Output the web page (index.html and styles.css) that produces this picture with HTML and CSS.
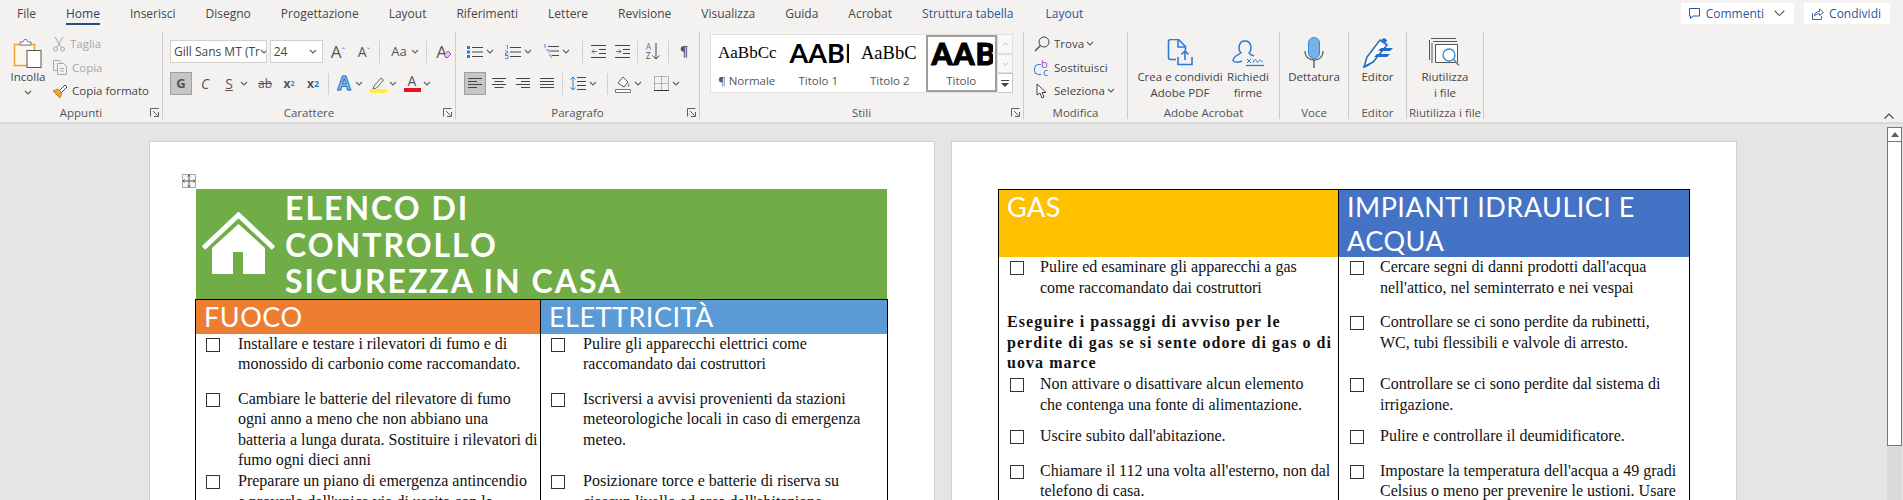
FILE: index.html
```html
<!DOCTYPE html>
<html lang="it">
<head>
    <meta charset="UTF-8">
    <meta name="viewport" content="width=device-width, initial-scale=1.0">
    <title>Elenco di controllo sicurezza in casa</title>
    <link rel="stylesheet" href="styles.css">
</head>
<body>
    <svg class="defs" width="0" height="0">
        <symbol id="chev" viewBox="0 0 8 5"><path d="M1 1l3 3 3-3" fill="none" stroke="#605e5c" stroke-width="1.1"/></symbol>
        <symbol id="launch" viewBox="0 0 9 9"><path d="M.5 8.500v-8h8M3 3l4.500 4.500M4 8.500h4.500V4" fill="none" stroke="#605e5c"/></symbol>
        <symbol id="left" viewBox="0 0 16 14"><path d="M1 1.500h14M1 4.500h9M1 7.500h14M1 10.500h9" fill="none" stroke="#444"/></symbol>
        <symbol id="center" viewBox="0 0 16 14"><path d="M1 1.500h14M3.500 4.500h9M1 7.500h14M3.500 10.500h9" fill="none" stroke="#444"/></symbol>
        <symbol id="right" viewBox="0 0 16 14"><path d="M1 1.500h14M6 4.500h9M1 7.500h14M6 10.500h9" fill="none" stroke="#444"/></symbol>
        <symbol id="justify" viewBox="0 0 16 14"><path d="M1 1.500h14M1 4.500h14M1 7.500h14M1 10.500h14" fill="none" stroke="#444"/></symbol>
    </svg>

    <!-- schede -->
    <div class="tabs">
        <span class="tab first">File</span>
        <span class="tab active">Home</span>
        <span class="tab">Inserisci</span>
        <span class="tab">Disegno</span>
        <span class="tab">Progettazione</span>
        <span class="tab">Layout</span>
        <span class="tab">Riferimenti</span>
        <span class="tab">Lettere</span>
        <span class="tab">Revisione</span>
        <span class="tab">Visualizza</span>
        <span class="tab">Guida</span>
        <span class="tab">Acrobat</span>
        <span class="tab context">Struttura tabella</span>
        <span class="tab context context-last">Layout</span>
        <div class="tab-actions">
            <div class="action comments">
                <svg width="13" height="13" viewBox="0 0 13 13"><path d="M1.500 1.500h10v7.500H5L2.500 11.500V9h-1z" fill="none" stroke="#2b579a"/></svg>
                <span>Commenti</span>
                <svg class="action-chev" width="11" height="7" viewBox="0 0 8 5"><path d="M.5.500L4 4 7.500.500" fill="none" stroke="#605e5c" stroke-width=".8"/></svg>
            </div>
            <div class="action">
                <svg width="13" height="13" viewBox="0 0 13 13"><path d="M1.500 6v6.500h9V9M3.500 9c0-3 2-4.500 5-4.500V2l4 3.500-4 3V6.500c-2 0-3.500 1-5 2.500z" fill="none" stroke="#2b579a" stroke-width=".9"/></svg>
                <span>Condividi</span>
            </div>
        </div>
    </div>

    <!-- barra multifunzione -->
    <div class="ribbon">
        <section class="group g-appunti">
            <div class="group-body row-top">
                <div class="big incolla">
                    <div class="big-icon">
                        <svg width="30" height="30" viewBox="0 0 30 30">
                            <rect x="1.500" y="6.500" width="20" height="21" fill="#fdf6ea" stroke="#e9a23b" stroke-width="1.500"/>
                            <path d="M7 7V4h3l1.500-2.500 2 0L15 4h3v3z" fill="#fff" stroke="#777"/>
                            <rect x="14" y="12.500" width="14" height="17" fill="#fff" stroke="#555"/>
                        </svg>
                    </div>
                    <span>Incolla</span>
                    <svg class="cv-big" width="8" height="5"><use href="#chev"/></svg>
                </div>
                <div class="small-list">
                    <div class="small disabled">
                        <svg width="14" height="16" viewBox="0 0 14 16"><path d="M3 1l6 10M11 1L5 11" stroke="#a6a6a6" fill="none"/><circle cx="3.500" cy="13" r="2" fill="none" stroke="#a6a6a6"/><circle cx="10.500" cy="13" r="2" fill="none" stroke="#a6a6a6"/></svg>
                        <span>Taglia</span>
                    </div>
                    <div class="small disabled">
                        <svg width="16" height="16" viewBox="0 0 16 16"><path d="M5 11.500H1.500v-10h6l2 2" fill="none" stroke="#a6a6a6"/><path d="M5.500 4.500h6l3 3v8h-9z" fill="none" stroke="#a6a6a6"/><path d="M8 9.500h4M8 12h4" stroke="#a6a6a6"/></svg>
                        <span>Copia</span>
                    </div>
                    <div class="small">
                        <svg width="16" height="16" viewBox="0 0 16 16"><path d="M1 8l5-2 4 4-2 5z" fill="#f0a33c" stroke="#c77e1c"/><path d="M8 7l5-5 2 2-5 5" fill="#fff" stroke="#444"/></svg>
                        <span>Copia formato</span>
                    </div>
                </div>
            </div>
            <div class="group-label">Appunti<svg class="launch" width="9" height="9"><use href="#launch"/></svg></div>
        </section>

        <section class="group g-carattere">
            <div class="group-body">
                <div class="tool-row">
                    <div class="combo font-combo"><span>Gill Sans MT (Tr</span><svg width="8" height="5"><use href="#chev"/></svg></div>
                    <div class="combo size-combo"><span>24</span><svg width="8" height="5"><use href="#chev"/></svg></div>
                    <span class="tb grow-a">A<sup>ˆ</sup></span>
                    <span class="tb shrink-a">A<sup>ˇ</sup></span>
                    <i class="sep"></i>
                    <span class="tb case-a">Aa</span><svg class="cv" width="8" height="5"><use href="#chev"/></svg>
                    <i class="sep sep-case"></i>
                    <span class="tb clear-a">A<svg width="9" height="9" viewBox="0 0 9 9"><path d="M1 5l4-4 3 3-4 4z" fill="#e8c5ef" stroke="#a64dbb"/></svg></span>
                </div>
                <div class="tool-row">
                    <span class="tb on bold">G</span>
                    <span class="tb italic">C</span>
                    <span class="tb under">S</span><svg class="cv" width="8" height="5"><use href="#chev"/></svg>
                    <span class="tb strike">ab</span>
                    <span class="tb script">x<sub>2</sub></span>
                    <span class="tb script">x<sup>2</sup></span>
                    <i class="sep"></i>
                    <span class="tb effect">A</span><svg class="cv" width="8" height="5"><use href="#chev"/></svg>
                    <span class="tb">
                        <svg width="17" height="18" viewBox="0 0 17 18"><path d="M4 11l7-8 2.500 2-7 8-3.500 1z" fill="none" stroke="#666"/><rect y="14" width="17" height="4" fill="#ffef3c"/></svg>
                    </span><svg class="cv" width="8" height="5"><use href="#chev"/></svg>
                    <span class="tb font-color">A</span><svg class="cv" width="8" height="5"><use href="#chev"/></svg>
                </div>
            </div>
            <div class="group-label">Carattere<svg class="launch" width="9" height="9"><use href="#launch"/></svg></div>
        </section>

        <section class="group g-paragrafo">
            <div class="group-body">
                <div class="tool-row">
                    <span class="tb">
                        <svg width="16" height="14" viewBox="0 0 16 14"><path d="M5 2.500h11M5 7h11M5 11.500h11" stroke="#444"/><path d="M0 1h3v3H0zM0 5.500h3v3H0zM0 10h3v3H0z" fill="#2b7cd3"/></svg>
                    </span><svg class="cv" width="8" height="5"><use href="#chev"/></svg>
                    <span class="tb">
                        <svg width="16" height="14" viewBox="0 0 16 14"><path d="M5 2.500h11M5 7h11M5 11.500h11" stroke="#444"/><path d="M1 0h1.500v4M0 6h2.500v2H.5v2H3M0 10.500h3v3H0" fill="none" stroke="#2b7cd3" stroke-width=".8"/></svg>
                    </span><svg class="cv" width="8" height="5"><use href="#chev"/></svg>
                    <span class="tb">
                        <svg width="16" height="15" viewBox="0 0 16 15"><path d="M5 2.500h11M7 7h9M9 11.500h7" stroke="#444"/><path d="M1 0h1v4M3 6h3v3M6 11h2v3" fill="none" stroke="#2b7cd3" stroke-width=".8"/></svg>
                    </span><svg class="cv" width="8" height="5"><use href="#chev"/></svg>
                    <i class="sep sep-push"></i>
                    <span class="tb">
                        <svg width="15" height="13" viewBox="0 0 15 13"><path d="M0 .500h15M8 4.500h7M8 8.500h7M0 12.500h15" stroke="#444"/><path d="M6 6.500H1M3 4.500l-2 2 2 2" fill="none" stroke="#2b7cd3"/></svg>
                    </span>
                    <span class="tb">
                        <svg width="15" height="13" viewBox="0 0 15 13"><path d="M0 .500h15M8 4.500h7M8 8.500h7M0 12.500h15" stroke="#444"/><path d="M1 6.500h5M4 4.500l2 2-2 2" fill="none" stroke="#2b7cd3"/></svg>
                    </span>
                    <i class="sep"></i>
                    <span class="tb sort"><span class="sort-text"><b>A</b><b>Z</b></span><svg width="8" height="17" viewBox="0 0 8 17"><path d="M4 0v16M.5 12.500L4 16l3.500-3.500" fill="none" stroke="#444"/></svg></span>
                    <i class="sep"></i>
                    <span class="tb pilcrow">¶</span>
                </div>
                <div class="tool-row">
                    <span class="tb on"><svg width="16" height="14"><use href="#left"/></svg></span>
                    <span class="tb"><svg width="16" height="14"><use href="#center"/></svg></span>
                    <span class="tb"><svg width="16" height="14"><use href="#right"/></svg></span>
                    <span class="tb"><svg width="16" height="14"><use href="#justify"/></svg></span>
                    <i class="sep"></i>
                    <span class="tb">
                        <svg width="16" height="15" viewBox="0 0 16 15"><path d="M7 1.500h9M7 5.500h9M7 9.500h9M7 13.500h9" stroke="#444"/><path d="M3 1v13M.5 3.500L3 1l2.500 2.500M.5 11.500L3 14l2.500-2.500" fill="none" stroke="#2b7cd3"/></svg>
                    </span><svg class="cv" width="8" height="5"><use href="#chev"/></svg>
                    <i class="sep"></i>
                    <span class="tb">
                        <svg width="16" height="18" viewBox="0 0 16 18"><path d="M3 8l5-6 5 5-4 5z" fill="#fff" stroke="#555"/><path d="M13 8l1.500 3-1.500 1z" fill="#2b7cd3"/><path d="M.5 14.500h15v3H.5z" fill="#fff" stroke="#777"/></svg>
                    </span><svg class="cv" width="8" height="5"><use href="#chev"/></svg>
                    <span class="tb">
                        <svg width="15" height="15" viewBox="0 0 15 15"><path d="M.5.500h14v14H.5zM.5 7.500h14M7.500.500v14" fill="none" stroke="#777" stroke-dasharray="1 1"/><path d="M0 14.500h15" stroke="#333"/></svg>
                    </span><svg class="cv" width="8" height="5"><use href="#chev"/></svg>
                </div>
            </div>
            <div class="group-label">Paragrafo<svg class="launch" width="9" height="9"><use href="#launch"/></svg></div>
        </section>

        <section class="group g-stili">
            <div class="group-body gallery-wrap">
                <div class="gallery">
                    <div class="style-card"><div class="sample s-normal">AaBbCcDd</div><div class="style-name">¶ Normale</div></div>
                    <div class="style-card"><div class="sample s-h1">AABB</div><div class="style-name">Titolo 1</div></div>
                    <div class="style-card"><div class="sample s-h2">AaBbC</div><div class="style-name">Titolo 2</div></div>
                    <div class="style-card selected"><div class="sample s-title">AABB</div><div class="style-name">Titolo</div></div>
                </div>
                <div class="gallery-scroll">
                    <span><svg width="7" height="4" viewBox="0 0 8 5"><path d="M1 4l3-3 3 3" fill="none" stroke="#b5b3b1"/></svg></span>
                    <span><svg width="7" height="4" viewBox="0 0 8 5"><path d="M1 1l3 3 3-3" fill="none" stroke="#b5b3b1"/></svg></span>
                    <span><svg width="8" height="8" viewBox="0 0 8 8"><path d="M0 1.500h8" stroke="#444"/><path d="M0 4h8L4 8z" fill="#444"/></svg></span>
                </div>
            </div>
            <div class="group-label">Stili<svg class="launch" width="9" height="9"><use href="#launch"/></svg></div>
        </section>

        <section class="group g-modifica">
            <div class="group-body row-top">
                <div class="small-list">
                    <div class="small">
                        <svg width="16" height="16" viewBox="0 0 16 16"><circle cx="10" cy="6" r="5" fill="none" stroke="#444"/><path d="M6.500 9.500L1 15" stroke="#444" stroke-width="1.300"/></svg>
                        <span>Trova</span><svg class="cv trova-cv" width="8" height="5"><use href="#chev"/></svg>
                    </div>
                    <div class="small">
                        <span class="replace"><b>b</b><i>c</i></span>
                        <span>Sostituisci</span>
                    </div>
                    <div class="small">
                        <svg width="16" height="16" viewBox="0 0 16 16"><path d="M3 1v11l3-2 2 5 2-1-2-4.500h4z" fill="#fff" stroke="#444"/></svg>
                        <span>Seleziona</span><svg class="cv" width="8" height="5"><use href="#chev"/></svg>
                    </div>
                </div>
            </div>
            <div class="group-label">Modifica</div>
        </section>

        <section class="group g-acrobat">
            <div class="group-body row-top">
                <div class="big crea">
                    <div class="big-icon">
                        <svg width="26" height="28" viewBox="0 0 26 28"><path d="M9 20.500H3.500a2 2 0 0 1-2-2V2.500a2 2 0 0 1 2-2h8l7 7v4" fill="none" stroke="#2b7cd3" stroke-width="1.600"/><path d="M11 1v7h7" fill="none" stroke="#2b7cd3" stroke-width="1.600"/><path d="M11 18v7.500h14V18M18 21v-9M14.500 15.500L18 12l3.500 3.500" fill="none" stroke="#2b7cd3" stroke-width="1.600"/></svg>
                    </div>
                    <span>Crea e condividi<br>Adobe PDF</span>
                </div>
                <div class="big firme">
                    <div class="big-icon">
                        <svg width="32" height="28" viewBox="0 0 32 28"><path d="M1 22c0-5 5-6 8-8-3-3-3-12 4-12s7 9 4 12c1 2 3 2 5 3M1 22c3 2 7 1 9 0" fill="none" stroke="#2b7cd3" stroke-width="1.500"/><path d="M15 20l4 4M19 20l-4 4M21 24c2-6 3-3 4-1s2-3 3-2 2 2 3 1" fill="none" stroke="#2b7cd3"/><path d="M14 26.500h18" stroke="#2b7cd3" stroke-width="1.300"/></svg>
                    </div>
                    <span>Richiedi<br>firme</span>
                </div>
            </div>
            <div class="group-label">Adobe Acrobat</div>
        </section>

        <section class="group g-voce">
            <div class="group-body row-top">
                <div class="big wide">
                    <div class="big-icon">
                        <svg width="20" height="31" viewBox="0 0 20 31"><rect x="4.500" y=".5" width="11" height="21" rx="5.500" fill="#77b1ea" stroke="#3e86d0"/><path d="M1 14c0 6 4 9 9 9s9-3 9-9" fill="none" stroke="#666" stroke-width="1.300"/><path d="M10 23v8" stroke="#666" stroke-width="1.500"/></svg>
                    </div>
                    <span>Dettatura</span>
                </div>
            </div>
            <div class="group-label">Voce</div>
        </section>

        <section class="group g-editor">
            <div class="group-body row-top">
                <div class="big wide">
                    <div class="big-icon">
                        <svg width="32" height="31" viewBox="0 0 32 31"><path d="M2 30l3-10L18 3l7 5-14 17z" fill="#fff" stroke="#1f6fc4" stroke-width="1.600"/><path d="M2 30l6-3" stroke="#1f6fc4" stroke-width="1.600"/><path d="M19 3l3-2 3 2-1 3zM19 11h12l-3 3H16zM15 17h13l-3 3H12z" fill="#1f6fc4"/></svg>
                    </div>
                    <span>Editor</span>
                </div>
            </div>
            <div class="group-label">Editor</div>
        </section>

        <section class="group g-riuso">
            <div class="group-body row-top">
                <div class="big wide">
                    <div class="big-icon">
                        <svg width="32" height="29" viewBox="0 0 32 29"><path d="M2 .5h25M.5 2v20M4 3.500h24M3 5v20" fill="none" stroke="#555"/><path d="M6.500 6.500h22v18h-22z" fill="#fff" stroke="#555"/><circle cx="20" cy="17" r="6" fill="#fff" stroke="#3e86d0" stroke-width="1.300"/><path d="M24.500 21.500L30 27.500" stroke="#3e86d0" stroke-width="1.500"/></svg>
                    </div>
                    <span>Riutilizza<br>i file</span>
                </div>
            </div>
            <div class="group-label">Riutilizza i file</div>
        </section>

        <svg class="collapse" width="10" height="6" viewBox="0 0 10 6"><path d="M.5 5.500L5 1l4.500 4.500" fill="none" stroke="#444" stroke-width="1.100"/></svg>
    </div>

    <!-- area documento -->
    <div class="workspace">
        <div class="pages">
            <article class="page page-left">
                <div class="move-handle">
                    <svg width="12" height="12" viewBox="0 0 12 12"><path d="M6 0v12M0 6h12M4.500 1.500L6 0l1.500 1.500M4.500 10.500L6 12l1.500-1.500M1.500 4.500L0 6l1.500 1.500M10.500 4.500L12 6l-1.500 1.500" fill="none" stroke="#555"/></svg>
                </div>
                <header class="banner">
                    <svg class="house" width="74" height="63" viewBox="0 0 74 63"><path d="M1.500 36L36.500 3l35 33" fill="none" stroke="#fff" stroke-width="5"/><path d="M36.500 12L63 36v26H41V40H31v22H10V36z" fill="#fff"/></svg>
                    <h1>ELENCO DI<br>CONTROLLO<br>SICUREZZA IN CASA</h1>
                </header>
                <table class="checklist first-table">
                    <colgroup><col class="col-a"><col></colgroup>
                    <tr>
                        <th class="orange">FUOCO</th>
                        <th class="sky">ELETTRICITÀ</th>
                    </tr>
                    <tr>
                        <td><div class="item"><i class="box"></i><p>Installare e testare i rilevatori di fumo e di<br>monossido di carbonio come raccomandato.</p></div></td>
                        <td><div class="item"><i class="box"></i><p>Pulire gli apparecchi elettrici come<br>raccomandato dai costruttori</p></div></td>
                    </tr>
                    <tr>
                        <td><div class="item flush"><i class="box"></i><p>Cambiare le batterie del rilevatore di fumo<br>ogni anno a meno che non abbiano una<br>batteria a lunga durata. Sostituire i rilevatori di<br>fumo ogni dieci anni</p></div></td>
                        <td><div class="item"><i class="box"></i><p>Iscriversi a avvisi provenienti da stazioni<br>meteorologiche locali in caso di emergenza<br>meteo.</p></div></td>
                    </tr>
                    <tr>
                        <td><div class="item"><i class="box"></i><p>Preparare un piano di emergenza antincendio<br>e provarlo dell'unica via di uscita con la</p></div></td>
                        <td><div class="item"><i class="box"></i><p>Posizionare torce e batterie di riserva su<br>ciascun livello ed area dell'abitazione</p></div></td>
                    </tr>
                </table>
            </article>

            <article class="page page-right">
                <table class="checklist second-table">
                    <colgroup><col class="col-b"><col></colgroup>
                    <tr>
                        <th class="gold">GAS</th>
                        <th class="blue">IMPIANTI IDRAULICI E ACQUA</th>
                    </tr>
                    <tr>
                        <td><div class="item"><i class="box"></i><p>Pulire ed esaminare gli apparecchi a gas<br>come raccomandato dai costruttori</p></div></td>
                        <td><div class="item"><i class="box"></i><p>Cercare segni di danni prodotti dall'acqua<br>nell'attico, nel seminterrato e nei vespai</p></div></td>
                    </tr>
                    <tr>
                        <td><p class="warning">Eseguire i passaggi di avviso per le<br>perdite di gas se si sente odore di gas o di<br>uova marce</p></td>
                        <td><div class="item"><i class="box"></i><p>Controllare se ci sono perdite da rubinetti,<br>WC, tubi flessibili e valvole di arresto.</p></div></td>
                    </tr>
                    <tr>
                        <td><div class="item tight"><i class="box"></i><p>Non attivare o disattivare alcun elemento<br>che contenga una fonte di alimentazione.</p></div></td>
                        <td><div class="item tight"><i class="box"></i><p>Controllare se ci sono perdite dal sistema di<br>irrigazione.</p></div></td>
                    </tr>
                    <tr>
                        <td><div class="item"><i class="box"></i><p>Uscire subito dall'abitazione.</p></div></td>
                        <td><div class="item"><i class="box"></i><p>Pulire e controllare il deumidificatore.</p></div></td>
                    </tr>
                    <tr>
                        <td><div class="item"><i class="box"></i><p>Chiamare il 112 una volta all'esterno, non dal<br>telefono di casa.</p></div></td>
                        <td><div class="item"><i class="box"></i><p>Impostare la temperatura dell'acqua a 49 gradi<br>Celsius o meno per prevenire le ustioni. Usare</p></div></td>
                    </tr>
                </table>
            </article>
        </div>

        <div class="scrollbar">
            <div class="scroll-btn"><svg width="8" height="5" viewBox="0 0 8 5"><path d="M0 5l4-5 4 5z" fill="#605e5c"/></svg></div>
            <div class="scroll-thumb"></div>
            <div class="scroll-track"></div>
        </div>
    </div>
</body>
</html>
```

FILE: styles.css
```css
* {
    box-sizing: border-box;
}

html, body {
    height: 500px;
    overflow: hidden;
}

body {
    margin: 0;
    background: #f3f2f1;
    color: #444;
    font-family: 'Open Sans', 'Noto Sans', sans-serif;
    font-size: 11.5px;
}

.defs {
    position: absolute;
}

svg {
    flex: none;
    display: block;
}

/* schede */
.tabs {
    display: flex;
    height: 32px;
    padding-left: 2px;
    font-size: 12px;
}

.tab {
    position: relative;
    height: 28px;
    padding: 5px 15px 0;
    line-height: 18px;
    white-space: nowrap;
    color: #484644;
}

.tab.active {
    color: #2b3f66;
}

.tab.active::after {
    content: '';
    position: absolute;
    left: 15px;
    right: 15px;
    bottom: 3px;
    height: 2px;
    background: #1e4e8c;
}

.tab.context {
    color: #2b579a;
}

.tab.context-last {
    margin-left: 2px;
}

.tab-actions {
    display: flex;
    gap: 10px;
    margin-left: auto;
    margin-right: 13px;
    padding-top: 3px;
}

.action {
    display: flex;
    align-items: center;
    gap: 5px;
    height: 21px;
    padding: 0 9px 0 7px;
    background: #fff;
    color: #2b579a;
}

.action-chev {
    margin-left: 5px;
}

/* barra multifunzione */
.ribbon {
    position: relative;
    display: flex;
    height: 92px;
    border-bottom: 2px solid #d9d8d8;
}

.group {
    display: flex;
    flex-direction: column;
    height: 87px;
    border-right: 1px solid #cdcbc9;
}

.g-appunti { width: 163px; }
.g-carattere { width: 293px; }
.g-paragrafo { width: 244px; }
.g-stili { width: 324px; }
.g-modifica { width: 104px; }
.g-acrobat { width: 152px; }
.g-voce { width: 69px; }
.g-editor { width: 58px; }
.g-riuso { width: 77px; }

.group-body {
    flex: 1;
    min-height: 0;
    padding: 8px 0 0 7px;
}

.g-paragrafo .group-body {
    padding-left: 8px;
}

.row-top {
    display: flex;
    padding: 0;
}

.group-label {
    position: relative;
    height: 13px;
    line-height: 13px;
    text-align: center;
    white-space: nowrap;
    color: #555;
}

.launch {
    position: absolute;
    right: 3px;
    top: 2px;
}

.big {
    display: flex;
    flex-direction: column;
    align-items: center;
    padding-top: 4px;
    line-height: 16px;
    text-align: center;
    white-space: nowrap;
}

.big-icon {
    display: flex;
    align-items: center;
    justify-content: center;
    height: 33px;
}

.incolla {
    width: 56px;
}

.cv-big {
    margin-top: 5px;
}

.wide {
    width: 100%;
}

.crea {
    width: 100px;
    margin-left: 2px;
}

.firme {
    width: 36px;
}

.small-list {
    display: flex;
    flex-direction: column;
}

.g-appunti .small-list {
    margin-left: -4px;
}

.g-modifica .small-list {
    padding-left: 10px;
}

.small {
    display: flex;
    align-items: center;
    gap: 4px;
    height: 23.5px;
    white-space: nowrap;
}

.small.disabled {
    color: #a6a6a6;
}

.trova-cv {
    margin-left: 12px;
}

.replace {
    position: relative;
    width: 16px;
    height: 16px;
    flex: none;
    font: 11px 'Open Sans', sans-serif;
}

.replace::before {
    content: '';
    position: absolute;
    left: 0;
    top: 5px;
    width: 6px;
    height: 9px;
    border: 1.500px solid #2b7cd3;
    border-right: none;
    border-radius: 5px 0 0 5px;
}

.replace b {
    position: absolute;
    left: 7px;
    top: -3px;
    font-weight: 400;
    color: #a64dbb;
}

.replace i {
    position: absolute;
    left: 9px;
    top: 5px;
    font-style: normal;
    color: #2b7cd3;
}

.tool-row {
    display: flex;
    align-items: center;
    gap: 2px;
    height: 23px;
    margin-bottom: 9px;
}

.combo {
    display: flex;
    align-items: center;
    justify-content: space-between;
    height: 23px;
    padding: 0 5px 0 3px;
    background: #fff;
    border: 1px solid #d2d0ce;
    font-size: 12px;
    white-space: nowrap;
}

.font-combo {
    width: 98px;
    margin-right: 1px;
    overflow: hidden;
}

.size-combo {
    width: 54px;
    margin-right: 2px;
}

.tb {
    display: flex;
    align-items: center;
    justify-content: center;
    flex: none;
    width: 22px;
    height: 23px;
    font-size: 14px;
    line-height: 1;
    color: #555;
}

.tb.on {
    background: #c8c6c4;
    border: 1px solid #a19f9d;
}

.cv {
    margin-left: -2px;
    margin-right: 2px;
}

.g-paragrafo .cv {
    margin-right: 6px;
}

.sep {
    flex: none;
    width: 1px;
    height: 22px;
    margin: 0 2px;
    background: #d2d0ce;
}

.sep-case {
    margin-left: 3px;
}

.sep-push {
    margin-left: 4px;
}

.grow-a, .shrink-a {
    font-size: 17px;
}

.shrink-a {
    margin-left: 2px;
    font-size: 14px;
}

.tb sup {
    font-size: 9px;
    color: #2b7cd3;
    line-height: 0;
    vertical-align: 4px;
}

.tb sub {
    font-size: 7px;
    color: #2b7cd3;
    line-height: 0;
}

.case-a {
    width: 24px;
    margin-left: 3px;
    font-size: 13px;
}

.clear-a {
    margin-left: 2px;
    font-size: 17px;
}

.clear-a svg {
    margin: 6px 0 0 -4px;
}

.bold {
    font-weight: 700;
    font-size: 13px;
}

.italic {
    font-style: italic;
}

.under {
    text-decoration: underline;
}

.strike {
    margin-left: 2px;
    font-size: 12px;
    text-decoration: line-through;
}

.script {
    font-weight: 700;
    font-size: 12px;
}

.effect {
    font-size: 19px;
    font-weight: 700;
    color: #8cc4f5;
    -webkit-text-stroke: 1px #1f6fc4;
}

.font-color {
    display: block;
    padding-top: 2px;
    text-align: center;
    font-size: 14px;
    line-height: 14px;
}

.font-color::after {
    content: '';
    display: block;
    width: 17px;
    height: 4px;
    margin: 0 auto;
    background: #e81123;
}

.sort {
    gap: 1px;
}

.sort-text {
    display: flex;
    flex-direction: column;
    font-size: 8.500px;
    line-height: 8.500px;
}

.sort-text b {
    font-weight: 400;
}

.sort-text b:first-child {
    color: #2b7cd3;
}

.pilcrow {
    font-family: 'Liberation Serif', serif;
    font-weight: 700;
    font-size: 15px;
}

/* stili */
.gallery-wrap {
    display: flex;
    padding: 2px 0 0 10px;
}

.gallery {
    display: flex;
    width: 288px;
    height: 59px;
    background: #fff;
    border: 1px solid #e1dfdd;
}

.style-card {
    width: 71.500px;
    padding-top: 4px;
    overflow: hidden;
    text-align: center;
    color: #555;
    white-space: nowrap;
}

.style-card.selected {
    border: 2px solid #a19f9d;
    padding-top: 2px;
}

.sample {
    display: flex;
    justify-content: flex-start;
    height: 28px;
    line-height: 28px;
    overflow: hidden;
    color: #000;
}

.s-normal {
    width: 66px;
    padding-left: 7px;
    font: 17px/28px 'Liberation Serif', serif;
}

.s-h1 {
    width: 66px;
    padding-left: 7px;
    font: 700 27px/28px 'Lato', sans-serif;
}

.s-h2 {
    padding-left: 7px;
    font: 18.500px/28px 'Liberation Serif', serif;
}

.s-title {
    width: 65px;
    padding-left: 4px;
    font: 900 30px/28px 'Lato', sans-serif;
    letter-spacing: 1px;
    -webkit-text-stroke: 1px #000;
}

.style-name {
    margin-top: 6px;
    line-height: 16px;
}

.gallery-scroll {
    display: flex;
    flex-direction: column;
    width: 15px;
    height: 59px;
}

.gallery-scroll span {
    display: flex;
    align-items: center;
    justify-content: center;
    flex: 1;
    background: #f9f8f8;
    border: 1px solid #e1dfdd;
    border-left: none;
}

.gallery-scroll span:last-child {
    background: #fff;
    border-color: #c8c6c4;
}

.collapse {
    position: absolute;
    right: 9px;
    bottom: 3px;
}

/* area documento */
.workspace {
    display: flex;
    height: 376px;
    overflow: hidden;
    background: #e6e5e5;
}

.pages {
    display: flex;
    flex: 1;
    gap: 16px;
    padding: 17px 0 0 149px;
    min-width: 0;
}

.page {
    flex: none;
    width: 786px;
    height: 900px;
    padding: 32px 46px 0 45px;
    background: #fff;
    border: 1px solid #d0cfcf;
}

.page-right {
    padding: 47px 46px 0 46px;
}

.move-handle {
    display: flex;
    align-items: center;
    justify-content: center;
    width: 14px;
    height: 14px;
    margin: 0 0 1px -13px;
    border: 1px solid #a6a6a6;
    background: #f8f8f8;
}

.banner {
    display: flex;
    height: 110px;
    margin: 0 1px;
    background: #70ad47;
}

.house {
    margin: 23px 0 0 6px;
}

.banner h1 {
    margin: 0 0 0 9px;
    padding-top: 1px;
    color: #fff;
    font: 700 32px/36.700px 'Lato', sans-serif;
    letter-spacing: 2px;
    white-space: nowrap;
}

.checklist {
    width: 693px;
    table-layout: fixed;
    border-collapse: collapse;
    border: 1px solid #000;
    font-family: 'Liberation Serif', serif;
    font-size: 16px;
    line-height: 20.600px;
    color: #111;
}

.second-table {
    width: 692px;
}

.col-a {
    width: 345px;
}

.col-b {
    width: 340px;
}

.checklist th {
    padding: 0 8px;
    border-right: 1px solid #000;
    text-align: left;
    vertical-align: top;
    color: #fff;
    font: 400 27px/33.500px 'Lato', sans-serif;
    letter-spacing: .5px;
}

.checklist td {
    padding: 0;
    border-right: 1px solid #000;
    vertical-align: top;
}

.orange { background: #ed7d31; }
.sky { background: #5b9bd5; }
.gold { background: #ffc000; }
.blue { background: #4472c4; }

.item {
    display: flex;
    padding: 0 0 14px 10px;
    white-space: nowrap;
}

.second-table .item {
    padding-left: 11px;
}

.item.flush {
    padding-bottom: 0;
}

.item.tight {
    padding-bottom: 11px;
}

.item p, .warning {
    margin: 0;
}

.box {
    flex: none;
    width: 14px;
    height: 14px;
    margin: 4px 18px 0 0;
    border: 1px solid #333;
}

.second-table .box {
    margin-right: 16px;
}

.warning {
    padding-left: 8px;
    font-weight: 700;
    letter-spacing: 1.050px;
    white-space: nowrap;
}

/* barra di scorrimento */
.scrollbar {
    display: flex;
    flex-direction: column;
    flex: none;
    width: 15px;
    margin: 3px 1px 0 0;
}

.scroll-btn {
    display: flex;
    align-items: center;
    justify-content: center;
    height: 15px;
    background: #fff;
    border: 1px solid #777;
}

.scroll-thumb {
    height: 304px;
    background: #fff;
    border: 1px solid #777;
    border-top: none;
}

.scroll-track {
    flex: 1;
    background: #dcdbdb;
}
```
